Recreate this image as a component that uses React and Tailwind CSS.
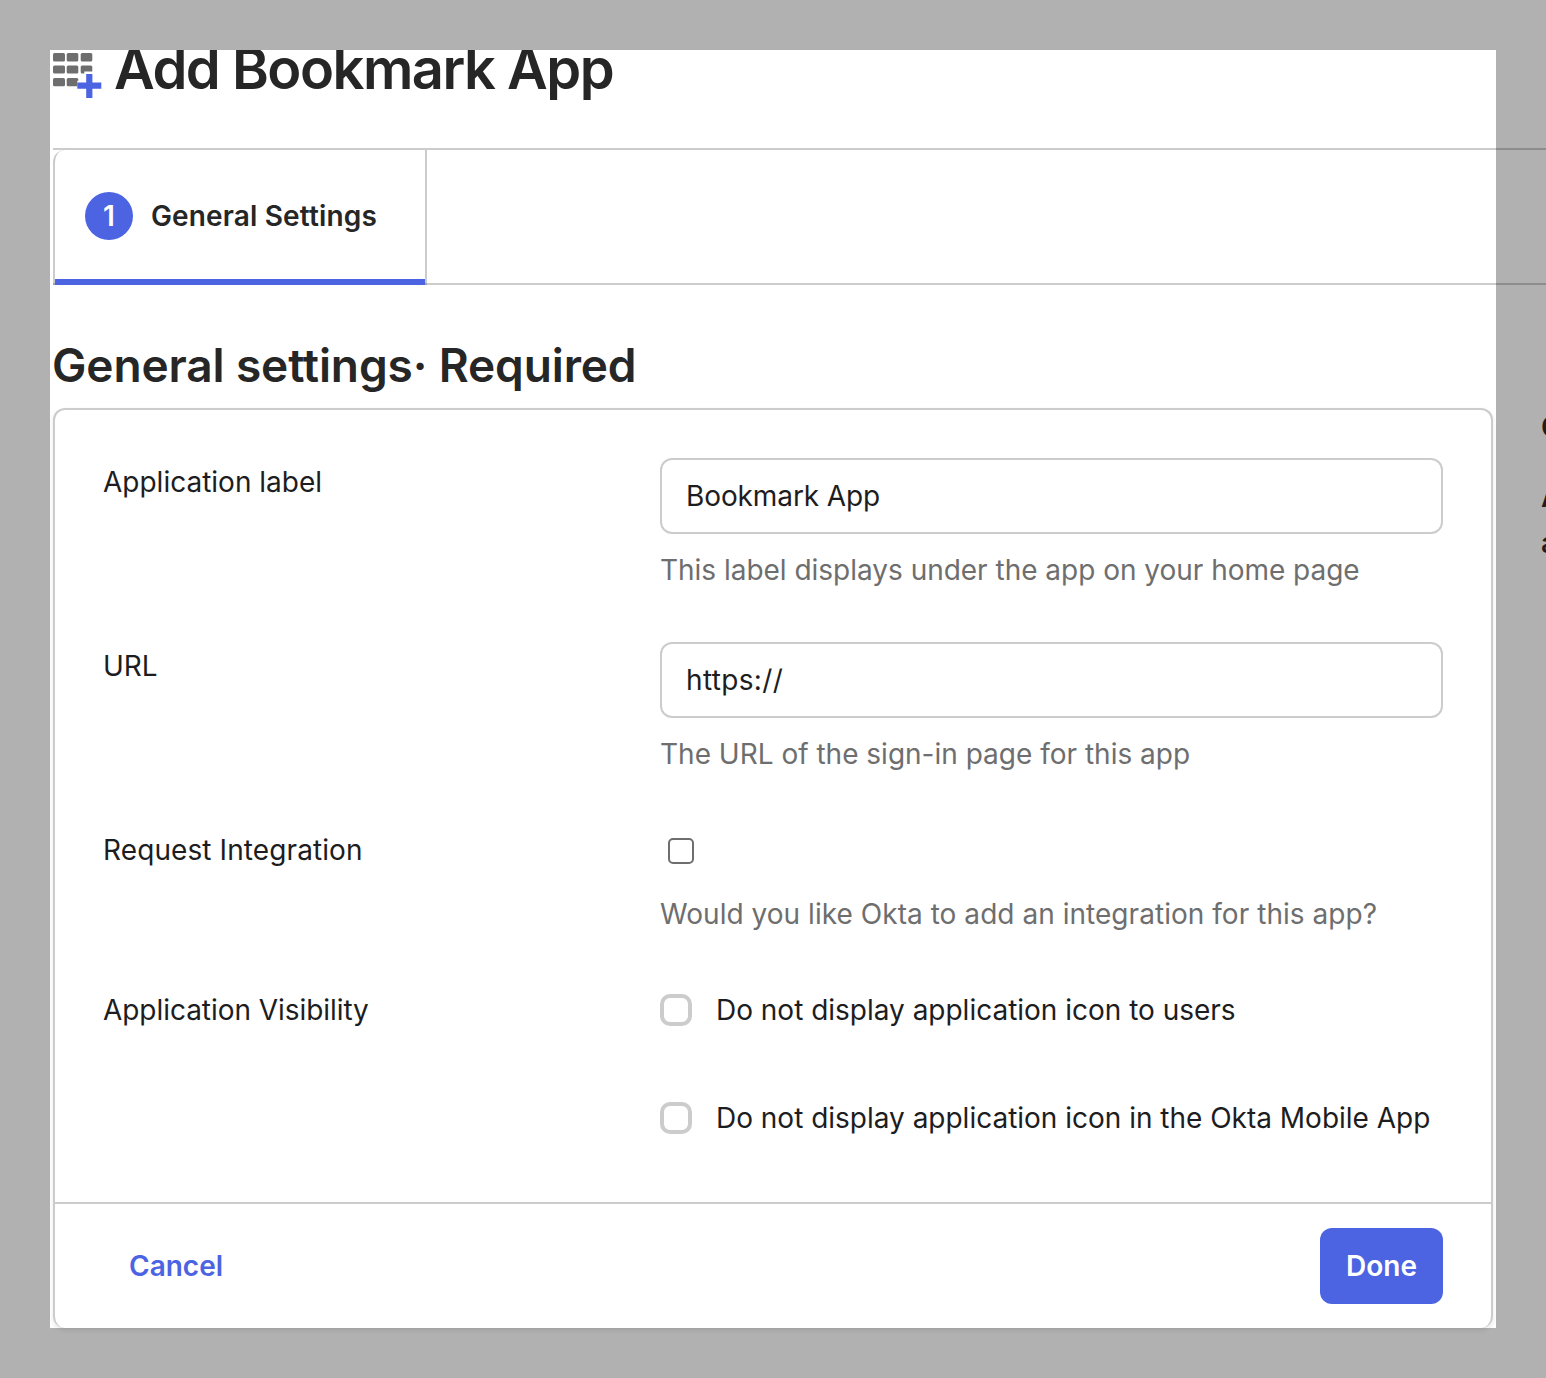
import React from 'react';

const AddAppIcon = () => (
    <svg width="50" height="46" viewBox="0 0 50 46" className="shrink-0">
        <g fill="#6e6e6e">
            <rect x="1" y="1" width="12" height="8.5" rx="1.5" />
            <rect x="14.7" y="1" width="11.6" height="8.5" rx="1.5" />
            <rect x="28.7" y="1" width="11.6" height="8.5" rx="1.5" />
            <rect x="1" y="13.4" width="12" height="8.2" rx="1.5" />
            <rect x="14.7" y="13.4" width="11.6" height="8.2" rx="1.5" />
            <rect x="28.7" y="13.4" width="11.6" height="8.2" rx="1.5" />
            <rect x="1" y="26" width="12" height="8.2" rx="1.5" />
            <rect x="14.7" y="26" width="11.6" height="8.2" rx="1.5" />
        </g>
        <path d="M37.3 19.5V46M25.3 33.7H49.3" stroke="#fff" strokeWidth="10" />
        <path d="M37.3 22V46M25.3 33.7H49.3" stroke="#4c64e2" strokeWidth="6.2" />
    </svg>
);

const Row = ({ label, labelClass, children, className }) => (
    <div className={`grid grid-cols-[557px_783px] ${className}`}>
        <div className={`text-[28px] leading-[48px] text-[#1d1d21] ${labelClass}`}>{label}</div>
        <div>{children}</div>
    </div>
);

const TextField = ({ value, className }) => (
    <div className={`h-[76px] flex items-center pl-[24px] border-2 border-[#cccccc] rounded-xl bg-white text-[28px] text-[#1d1d21] ${className}`}>
        {value}
    </div>
);

const Hint = ({ children, className }) => (
    <p className={`text-[28px] leading-[36px] text-[#6e6e6e] ${className}`}>{children}</p>
);

const Visibility = ({ children, className }) => (
    <label className={`flex items-center gap-[24px] h-[32px] ${className}`}>
        <span className="w-[32px] h-[32px] shrink-0 rounded-[10px] border-4 border-[#cccccc] bg-white" />
        <span className="text-[28px] tracking-[-0.01px] text-[#1d1d21] whitespace-nowrap">{children}</span>
    </label>
);

const App = () => {
    return (
        <div className="w-[1546px] h-[1378px] overflow-hidden bg-[#b1b1b1] pt-[50px] pl-[50px] flex font-['Inter',sans-serif]">
            <main className="w-[1446px] h-[1278px] shrink-0 bg-white pl-[3px]">
                {/* Title, cut off by the top of the panel */}
                <header className="h-[98px] overflow-hidden flex items-start">
                    <div className="-ml-[1px] mt-[2px]">
                        <AddAppIcon />
                    </div>
                    <h1 className="ml-[12px] -mt-[15px] text-[56px] leading-[68px] font-[560] tracking-[-1.5px] text-[#262626] whitespace-nowrap">
                        Add Bookmark App
                    </h1>
                </header>

                {/* Wizard tabs, the rule runs on past the panel */}
                <div className="w-[1493px] h-[137px] flex border-y-2 border-black/20">
                    <div className="w-[374px] h-[135px] border-x-2 border-black/20 rounded-tl-xl flex flex-col">
                        <div className="flex-1 pt-[3px] flex items-center gap-[18px] pl-[30px]">
                            <span className="w-[48px] h-[48px] rounded-full bg-[#4c64e2] text-white text-[28px] font-semibold flex items-center justify-center">1</span>
                            <span className="text-[28px] font-semibold tracking-[0.15px] text-[#262626] whitespace-nowrap">General Settings</span>
                        </div>
                        <div className="h-[6px] bg-[#4c64e2]" />
                    </div>
                </div>

                <h2 className="-ml-[1px] mt-[48px] h-[75px] text-[46px] leading-[64px] font-semibold tracking-[-0.12px] text-[#262626] whitespace-nowrap">
                    General settings· Required
                </h2>

                <section className="w-[1440px] h-[920px] border-2 border-b-0 border-[#cccccc] rounded-xl bg-white shadow-[0_2px_4px_rgba(0,0,0,0.1)] flex flex-col">
                    <div className="pt-[48px] pl-[48px] flex-1">
                        <Row label="Application label">
                            <TextField value="Bookmark App" className="tracking-[-0.1px]" />
                            <div className="mt-[18px]"><Hint className="tracking-[-0.02px]">This label displays under the app on your home page</Hint></div>
                        </Row>
                        <Row label="URL" className="mt-[54px]">
                            <TextField value="https://" className="tracking-[0.35px]" />
                            <div className="mt-[18px]"><Hint>The URL of the sign-in page for this app</Hint></div>
                        </Row>
                        <Row label="Request Integration" labelClass="tracking-[0.1px]" className="mt-[54px]">
                            <div className="h-[48px] pt-[1px] flex items-center pl-[8px]">
                                <span className="w-[26px] h-[26px] rounded-[5px] border-2 border-[#6e6e6e] bg-white" />
                            </div>
                            <div className="mt-[22px]"><Hint className="tracking-[0.04px]">Would you like Okta to add an integration for this app?</Hint></div>
                        </Row>
                        <Row label="Application Visibility" labelClass="tracking-[-0.05px]" className="mt-[54px]">
                            <div className="pt-[8px]">
                                <Visibility>Do not display application icon to users</Visibility>
                                <Visibility className="mt-[76px]">Do not display application icon in the Okta Mobile App</Visibility>
                            </div>
                        </Row>
                    </div>
                    <footer className="h-[126px] border-t-2 border-[#cccccc] flex items-center justify-between pl-[74px] pr-[48px]">
                        <a className="text-[28px] font-semibold text-[#4c64e2]">Cancel</a>
                        <button className="w-[123px] h-[76px] rounded-xl bg-[#4c64e2] text-white text-[28px] font-semibold">Done</button>
                    </footer>
                </section>
            </main>

            {/* Neighbouring page text, only its first letters are in frame */}
            <aside className="ml-[45px] pt-[359px] text-[28px] font-semibold text-[#1d1d21] whitespace-nowrap">
                <div className="leading-[36px]">G</div>
                <div className="mt-[34px] leading-[36px]">A</div>
                <div className="mt-[10px] leading-[36px]">a</div>
            </aside>
        </div>
    );
};

export default App;
